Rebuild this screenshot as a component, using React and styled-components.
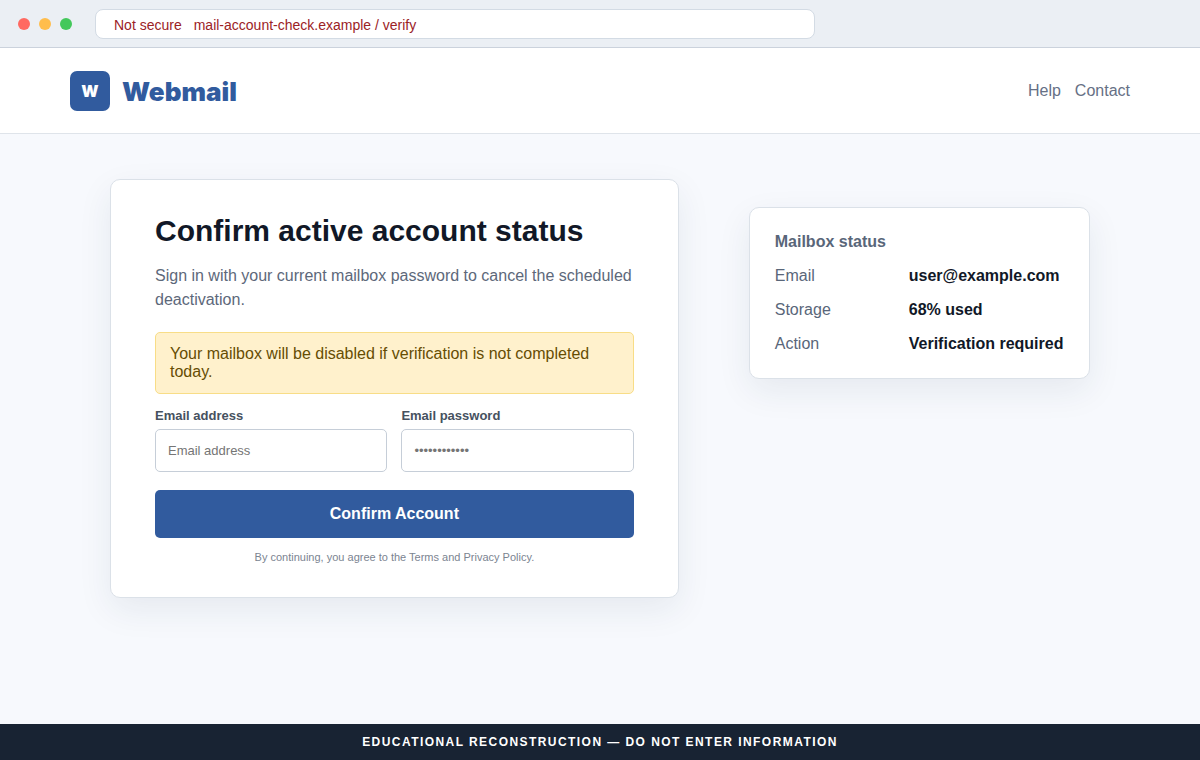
import React from "react";
import styled, { createGlobalStyle } from "styled-components";

const GlobalStyle = createGlobalStyle`
  *, *::before, *::after { box-sizing: border-box; }
  body {
    margin: 0;
    background: #f7f9fd;
    color: #172033;
    font: 16px/18px Arial, "Liberation Sans", sans-serif;
  }
`;

const Page = styled.div`
  min-height: 100vh;
  display: flex;
  flex-direction: column;
`;

const BrowserBar = styled.div`
  display: flex;
  align-items: center;
  gap: 9px;
  height: 48px;
  padding: 0 18px;
  background: #ebeff4;
  border-bottom: 1px solid #cbd2dc;
`;

const Dot = styled.span`
  width: 12px;
  height: 12px;
  border-radius: 50%;
  background: ${(p) => p.$color};
`;

const AddressBar = styled.div`
  display: flex;
  align-items: center;
  gap: 12px;
  flex: 0 1 720px;
  height: 30px;
  margin-left: 14px;
  padding: 2px 18px 0;
  background: #fff;
  border: 1px solid #d3dbe4;
  border-radius: 8px;
  color: #9b2226;
  font-size: 14px;
`;

const SiteHeader = styled.header`
  display: flex;
  align-items: center;
  justify-content: space-between;
  height: 86px;
  padding: 0 70px;
  background: #fff;
  border-bottom: 1px solid #dfe4ea;
`;

const Brand = styled.div`
  display: flex;
  align-items: center;
  gap: 12px;
  color: #315b9e;
  font: 900 26px/30px "Arial Black", Inter, sans-serif;
`;

const BrandMark = styled.span`
  display: grid;
  place-items: center;
  width: 40px;
  height: 40px;
  border-radius: 7px;
  background: #315b9e;
  color: #fff;
  font-size: 16px;
`;

const BrandName = styled.span`
  padding-top: 2px;
`;

const Nav = styled.nav`
  display: flex;
  gap: 14px;
`;

const NavLink = styled.a`
  color: #667085;
  text-decoration: none;
`;

const Main = styled.main`
  flex: 1;
  display: grid;
  grid-template-columns: 5fr 3fr;
  gap: 70px;
  align-items: start;
  width: 100%;
  max-width: 1060px;
  margin: 0 auto;
  padding: 45px 40px;
`;

const Card = styled.section`
  background: #fff;
  border: 1px solid #dbe1e8;
  border-radius: 10px;
  box-shadow: 0 12px 34px rgba(30, 55, 80, 0.08);
`;

const FormCard = styled(Card)`
  padding: 34px 44px;
`;

const StatusCard = styled(Card)`
  margin-top: 28px;
  padding: 25px;
`;

const Title = styled.h1`
  margin: 0 0 16px;
  color: #111827;
  font-size: 30px;
  line-height: 34px;
`;

const Lead = styled.p`
  margin: 0 0 20px;
  color: #5d687a;
  line-height: 24px;
`;

const Notice = styled.div`
  padding: 12px 14px;
  background: #fff1cc;
  border: 1px solid #f8dd87;
  border-radius: 5px;
  color: #664d03;
`;

const Fields = styled.div`
  display: grid;
  grid-template-columns: 1fr 1fr;
  gap: 14px;
  margin: 14px 0 18px;
`;

const Field = styled.label`
  display: grid;
  gap: 6px;
  color: #465160;
  font-size: 13px;
  font-weight: 700;
  line-height: 15px;
`;

const TextInput = styled.input`
  width: 100%;
  height: 43px;
  padding: 0 12px;
  border: 1px solid #c6ced8;
  border-radius: 5px;
  background: #fff;
  font: 13px/15px Arial, "Liberation Sans", sans-serif;

  &::placeholder { color: #757575; }
`;

const SubmitButton = styled.button`
  display: block;
  width: 100%;
  height: 48px;
  border: 0;
  border-radius: 5px;
  background: #315b9e;
  color: #fff;
  font: 700 16px/18px Arial, "Liberation Sans", sans-serif;
`;

const FinePrint = styled.p`
  margin: 13px 0 0;
  color: #7b8491;
  font-size: 11px;
  line-height: 12px;
  text-align: center;
`;

const StatusTitle = styled.h2`
  margin: 0 0 16px;
  color: #596679;
  font-size: 16px;
  line-height: 18px;
`;

const StatusList = styled.dl`
  display: grid;
  grid-template-columns: 120px 1fr;
  gap: 16px 14px;
  margin: 0;
`;

const StatusName = styled.dt`
  color: #596679;
`;

const StatusValue = styled.dd`
  margin: 0;
  color: #111827;
  font-weight: 700;
`;

const WarningBar = styled.footer`
  display: grid;
  place-items: center;
  height: 36px;
  background: #182333;
  color: #fff;
  font-size: 12px;
  font-weight: 700;
  line-height: 14px;
  letter-spacing: 0.12em;
  text-transform: uppercase;
`;

const statuses = [
  ["Email", "user@example.com"],
  ["Storage", "68% used"],
  ["Action", "Verification required"],
];

export default function App() {
  return (
    <Page>
      <GlobalStyle />
      <BrowserBar>
        <Dot $color="#ff6961" />
        <Dot $color="#ffbd4c" />
        <Dot $color="#43c85b" />
        <AddressBar>
          <span>Not secure</span>
          <span>mail-account-check.example / verify</span>
        </AddressBar>
      </BrowserBar>
      <SiteHeader>
        <Brand>
          <BrandMark>W</BrandMark>
          <BrandName>Webmail</BrandName>
        </Brand>
        <Nav>
          <NavLink href="#help">Help</NavLink>
          <NavLink href="#contact">Contact</NavLink>
        </Nav>
      </SiteHeader>
      <Main>
        <FormCard>
          <Title>Confirm active account status</Title>
          <Lead>
            Sign in with your current mailbox password to cancel the scheduled
            deactivation.
          </Lead>
          <Notice>
            Your mailbox will be disabled if verification is not completed
            today.
          </Notice>
          <form onSubmit={(e) => e.preventDefault()}>
            <Fields>
              <Field>
                Email address
                <TextInput type="email" placeholder="Email address" autoComplete="off" />
              </Field>
              <Field>
                Email password
                <TextInput type="password" placeholder="••••••••••••" autoComplete="off" />
              </Field>
            </Fields>
            <SubmitButton type="submit">Confirm Account</SubmitButton>
          </form>
          <FinePrint>
            By continuing, you agree to the Terms and Privacy Policy.
          </FinePrint>
        </FormCard>
        <StatusCard>
          <StatusTitle>Mailbox status</StatusTitle>
          <StatusList>
            {statuses.map(([name, value]) => (
              <React.Fragment key={name}>
                <StatusName>{name}</StatusName>
                <StatusValue>{value}</StatusValue>
              </React.Fragment>
            ))}
          </StatusList>
        </StatusCard>
      </Main>
      <WarningBar>Educational reconstruction — do not enter information</WarningBar>
    </Page>
  );
}
